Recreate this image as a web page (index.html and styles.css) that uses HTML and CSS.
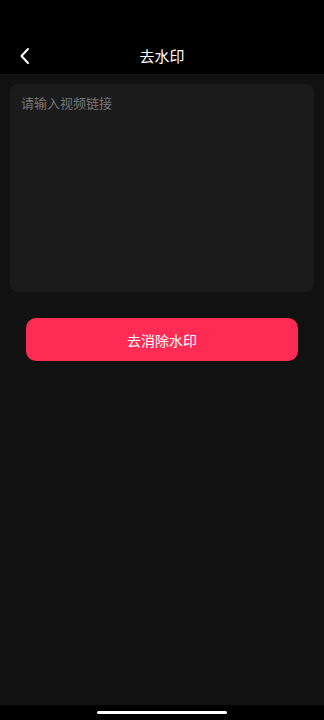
FILE: index.html
```html
<!DOCTYPE html>
<html lang="zh-CN">
<head>
    <meta charset="UTF-8">
    <meta name="viewport" content="width=device-width, initial-scale=1.0">
    <title>去水印</title>
    <link rel="stylesheet" href="styles.css">
</head>
<body>
    <div class="page">
        <!-- Header -->
        <div class="header">
            <span class="back-btn">
                <svg width="12" height="18" viewBox="0 0 12 18"><path d="M9 2 L2.5 9 L9 16" fill="none" stroke="#fff" stroke-width="2" stroke-linecap="round" stroke-linejoin="round"/></svg>
            </span>
            <h1 class="title-text">去水印</h1>
        </div>

        <!-- Main Content -->
        <div class="main-container">
            <div class="input-box">
                <textarea class="link-input" placeholder="请输入视频链接"></textarea>
            </div>
            <button class="action-btn">去消除水印</button>
        </div>

        <div class="home-bar">
            <span class="home-indicator"></span>
        </div>
    </div>
</body>
</html>
```

FILE: styles.css
```css
/* Global Styles */
body, html {
    margin: 0;
    padding: 0;
    height: 100%;
    background-color: #000;
    font-family: "Noto Sans CJK SC", "Noto Sans", sans-serif;
}

.page {
    display: flex;
    flex-direction: column;
    height: 720px;
}

/* Header */
.header {
    height: 74px;
    background-color: #000;
    display: flex;
    align-items: flex-end;
    justify-content: center;
    position: relative;
    box-sizing: border-box;
    padding-bottom: 7px;
}

.back-btn {
    position: absolute;
    left: 19px;
    bottom: 9px;
    display: flex;
}

.title-text {
    margin: 0;
    font-size: 15px;
    font-weight: normal;
    color: #fff;
    line-height: 22px;
}

/* Main Content */
.main-container {
    flex-grow: 1;
    background-color: #111;
    padding: 10px 10px 0;
    display: flex;
    flex-direction: column;
}

.input-box {
    height: 208px;
    background-color: #1b1b1b;
    border-radius: 8px;
    padding: 9px 11px;
    box-sizing: border-box;
}

.link-input {
    width: 100%;
    height: 100%;
    border: none;
    background: none;
    resize: none;
    outline: none;
    padding: 0;
    color: #ddd;
    font-family: inherit;
    font-size: 13px;
    line-height: 20px;
}

.link-input::placeholder {
    color: #777;
}

.action-btn {
    margin: 26px 16px 0;
    height: 43px;
    background-color: #fe2c55;
    color: #fff;
    border: none;
    border-radius: 10px;
    font-family: inherit;
    font-size: 14px;
    cursor: pointer;
}

.home-bar {
    height: 15px;
    background-color: #000;
    display: flex;
    justify-content: center;
    align-items: center;
}

.home-indicator {
    width: 130px;
    height: 3px;
    border-radius: 2px;
    background-color: #fff;
}
```
